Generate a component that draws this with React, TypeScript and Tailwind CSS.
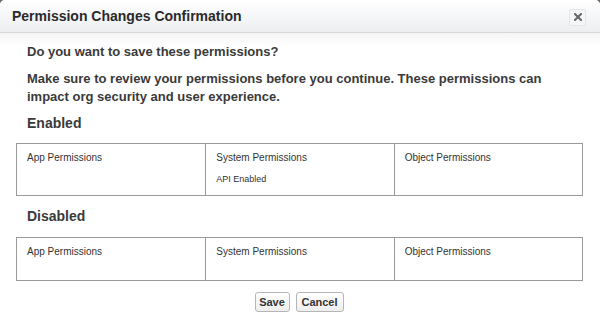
// App.tsx
const columns = [
  { title: "App Permissions", items: [] as string[] },
  { title: "System Permissions", items: [] as string[] },
  { title: "Object Permissions", items: [] as string[] },
];

function PermissionTable({ cells }: { cells: { title: string; items: string[] }[] }) {
  return (
    <div className="grid grid-cols-3 border border-[#9a9a9a]">
      {cells.map((cell, i) => (
        <div
          key={cell.title}
          className={`min-h-[42px] pl-[10px] pt-[7px] pb-[9px] ${i > 0 ? "border-l border-[#9a9a9a]" : ""}`}
        >
          <div className="text-[10px] leading-[14px] text-[#333]">{cell.title}</div>
          {cell.items.map((item) => (
            <div key={item} className="mt-[7px] text-[9px] leading-[14px] text-[#333]">
              {item}
            </div>
          ))}
        </div>
      ))}
    </div>
  );
}

export default function App() {
  const enabled = columns.map((c) =>
    c.title === "System Permissions" ? { ...c, items: ["API Enabled"] } : c
  );

  return (
    <div className="w-[600px] h-[328px] bg-[#6b6b6b] font-['Liberation_Sans',Arial,sans-serif]">
      <div className="w-full h-full bg-white rounded-t-[5px] overflow-hidden flex flex-col">
        {/* Header */}
        <div className="h-[33px] shrink-0 flex items-center justify-between pl-[12px] pr-[14px] bg-gradient-to-b from-white to-[#eceef0] border-b border-[#d6d8da]">
          <h1 className="text-[14px] font-bold text-[#2a2a2a]">Permission Changes Confirmation</h1>
          <button className="w-[17px] h-[17px] mt-[2px] flex items-center justify-center rounded-[2px] bg-[#f5f6f7] border border-[#e4e6e8]">
            <svg width="8" height="8" viewBox="0 0 8 8">
              <path d="M1 1L7 7M7 1L1 7" stroke="#666" strokeWidth="2" strokeLinecap="square" />
            </svg>
          </button>
        </div>

        {/* Body */}
        <div className="flex-1 bg-gradient-to-b from-[#f5f5f5] to-white to-[14px] pl-[16px] pr-[17px]">
          <p className="mt-[10px] ml-[11px] text-[13px] leading-[18px] font-bold text-[#3a3a3a]">
            Do you want to save these permissions?
          </p>
          <p className="mt-[9px] ml-[11px] text-[13px] leading-[18px] font-bold text-[#3a3a3a]">
            Make sure to review your permissions before you continue. These permissions can
            impact org security and user experience.
          </p>

          <h2 className="mt-[8px] ml-[11px] text-[14px] leading-[18px] font-bold text-[#3a3a3a]">Enabled</h2>
          <div className="mt-[11px]">
            <PermissionTable cells={enabled} />
          </div>

          <h2 className="mt-[11px] ml-[11px] text-[14px] leading-[18px] font-bold text-[#3a3a3a]">Disabled</h2>
          <div className="mt-[12px]">
            <PermissionTable cells={columns} />
          </div>

          <div className="mt-[11px] flex justify-center gap-[6px] pr-[1px]">
            <button className="h-[20px] w-[35px] rounded-[3px] border border-[#b5b5b5] bg-gradient-to-b from-white to-[#eeeeee] text-[11px] font-bold text-[#333]">
              Save
            </button>
            <button className="h-[20px] w-[48px] rounded-[3px] border border-[#b5b5b5] bg-gradient-to-b from-white to-[#eeeeee] text-[11px] font-bold text-[#333]">
              Cancel
            </button>
          </div>
        </div>
      </div>
    </div>
  );
}
